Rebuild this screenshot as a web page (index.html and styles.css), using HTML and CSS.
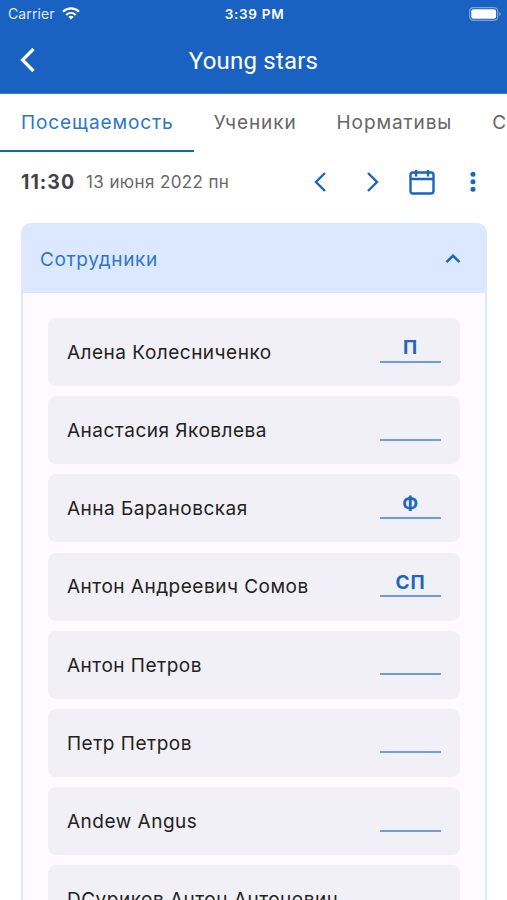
FILE: index.html
```
<!DOCTYPE html>
<html lang="ru">
<head>
<meta charset="utf-8">
<title>Young stars</title>
<link rel="stylesheet" href="styles.css">
</head>
<body>
<div class="screen">
  <header class="header">
    <div class="status">
      <div class="carrier"><span>Carrier</span>
        <svg class="wifi" width="18" height="13" viewBox="0 0 18 13" fill="none" stroke="#fff" stroke-width="2.2"><path d="M1 4.8C5.600 .2 12.400 .2 17 4.800"/><path d="M4.200 8C7 5.300 11 5.300 13.800 8"/><path d="M9 12.500 6.300 9.800Q9 7.600 11.700 9.800Z" fill="#fff" stroke="none"/></svg>
      </div>
      <div class="clock">3:39 PM</div>
      <svg class="battery" width="32" height="14" viewBox="0 0 32 14"><rect x=".7" y=".7" width="28" height="12.600" rx="3.600" fill="none" stroke="#79a5df" stroke-width="1.200"/><rect x="2.300" y="2.300" width="24.800" height="9.400" rx="2.200" fill="#fff"/><path d="M30.300 5v4q1.500-.6 1.500-2t-1.500-2z" fill="#79a5df"/></svg>
    </div>
    <div class="bar">
      <svg class="back" width="18" height="26" viewBox="0 0 18 26" fill="none" stroke="#fff" stroke-width="3.200"><path d="M15.500 2 4.500 13l11 11"/></svg>
      <h1 class="title">Young stars</h1>
    </div>
  </header>
  <nav class="tabs">
    <a class="tab active">Посещаемость</a>
    <a class="tab">Ученики</a>
    <a class="tab">Нормативы</a>
    <a class="tab">С</a>
  </nav>
  <div class="daybar">
    <span class="time">11:30</span>
    <span class="date">13 июня 2022 пн</span>
    <div class="tools">
      <svg class="prev" width="14" height="22" viewBox="0 0 14 22"><path d="M12 2 3 11l9 9"/></svg>
      <svg width="14" height="22" viewBox="0 0 14 22"><path d="m2 2 9 9-9 9"/></svg>
      <svg class="calendar" width="26" height="26" viewBox="0 0 26 26"><rect x="1.500" y="3.500" width="23" height="21" rx="2.500"/><path d="M1.500 10h23M7 1v6.500M19 1v6.500"/></svg>
      <svg class="more" width="6" height="22" viewBox="0 0 6 22"><circle cx="3" cy="3.200" r="2.500"/><circle cx="3" cy="10.700" r="2.500"/><circle cx="3" cy="18.200" r="2.500"/></svg>
    </div>
  </div>
  <section class="group">
    <div class="group-head">
      <span>Сотрудники</span>
      <svg width="16" height="10" viewBox="0 0 16 10"><path d="M1.500 8.200 8 1.700l6.500 6.500"/></svg>
    </div>
    <div class="list">
      <div class="row"><span class="name">Алена Колесниченко</span><span class="mark">П</span></div>
      <div class="row"><span class="name">Анастасия Яковлева</span><span class="mark"></span></div>
      <div class="row"><span class="name">Анна Барановская</span><span class="mark">Ф</span></div>
      <div class="row"><span class="name">Антон Андреевич Сомов</span><span class="mark">СП</span></div>
      <div class="row"><span class="name">Антон Петров</span><span class="mark"></span></div>
      <div class="row"><span class="name">Петр Петров</span><span class="mark"></span></div>
      <div class="row"><span class="name">Andew Angus</span><span class="mark"></span></div>
      <div class="row"><span class="name">DСуриков Антон Антонович</span><span class="mark"></span></div>
    </div>
  </section>
</div>
</body>
</html>
```
FILE: styles.css
```
* { box-sizing: border-box; }
body { margin: 0; background: #fff; font-family: Inter, "Liberation Sans", sans-serif; }
.screen { width: 507px; height: 900px; overflow: hidden; background: #fff; }
.header { height: 94px; background: #1a62c1; border-bottom: 1px solid #3f7fcf; color: #fff; }
.status { display: grid; grid-template-columns: 1fr auto 1fr; align-items: center; height: 27px; padding: 0 6px 0 8px; }
.carrier { display: flex; align-items: center; gap: 7px; font-size: 14px; letter-spacing: .1px; color: #dbe8fa; }
.clock { font-size: 13.500px; font-weight: 600; letter-spacing: .7px; }
.battery { justify-self: end; }
.bar { display: grid; grid-template-columns: 40px 1fr 40px; align-items: center; height: 66px; padding: 0 18px; }
.title { margin: 0; padding-top: 2px; font: 400 24px/32px Roboto, sans-serif; letter-spacing: .2px; text-align: center; }
.tabs { display: flex; height: 58px; white-space: nowrap; }
.tab { flex: none; padding: 17px 20px 0; font-size: 19px; line-height: 24px; letter-spacing: .9px; color: #666; }
.active { padding-left: 21px; color: #2d75cb; border-bottom: 2.500px solid #1a62b8; }
.daybar { display: flex; align-items: center; height: 59px; padding: 0 31px 0 21px; color: #444; }
.time { font-size: 19.500px; font-weight: 700; letter-spacing: 1px; }
.date { margin-left: 11px; font-size: 17px; letter-spacing: .38px; color: #686868; }
.tools { display: flex; align-items: center; margin-left: auto; fill: none; stroke: #1a65bd; stroke-width: 2.400; gap: 38px; }
.prev { margin-right: 1px; }
.calendar { margin-left: -9px; margin-right: -3px; }
.more { fill: #1a65bd; stroke: none; }
.group { margin: 12px 20px 0 21px; border: 2px solid #dce9fc; border-radius: 10px; background: #fefaff; overflow: hidden; }
.group-head { display: flex; align-items: center; justify-content: space-between; height: 68px; padding: 0 24px 0 17px; background: #dce8ff; color: #2e76c8; font-size: 19px; letter-spacing: .65px; }
.group-head svg { fill: none; stroke: #1a65bd; stroke-width: 2.500; }
.list { display: flex; flex-direction: column; gap: 10.200px; padding: 25px; }
.row { display: flex; align-items: center; justify-content: space-between; flex: none; height: 68px; padding: 0 19px; border-radius: 8px; background: #f1f0f6; }
.name { padding-top: .6px; font-size: 19px; letter-spacing: .5px; color: #222; }
.mark { align-self: flex-start; width: 61px; height: 29.500px; margin-top: 15px; border-bottom: 2px solid #6f9ed6; text-align: center; font-size: 19px; line-height: 30px; font-weight: 700; letter-spacing: .8px; color: #1b68bd; }
```
